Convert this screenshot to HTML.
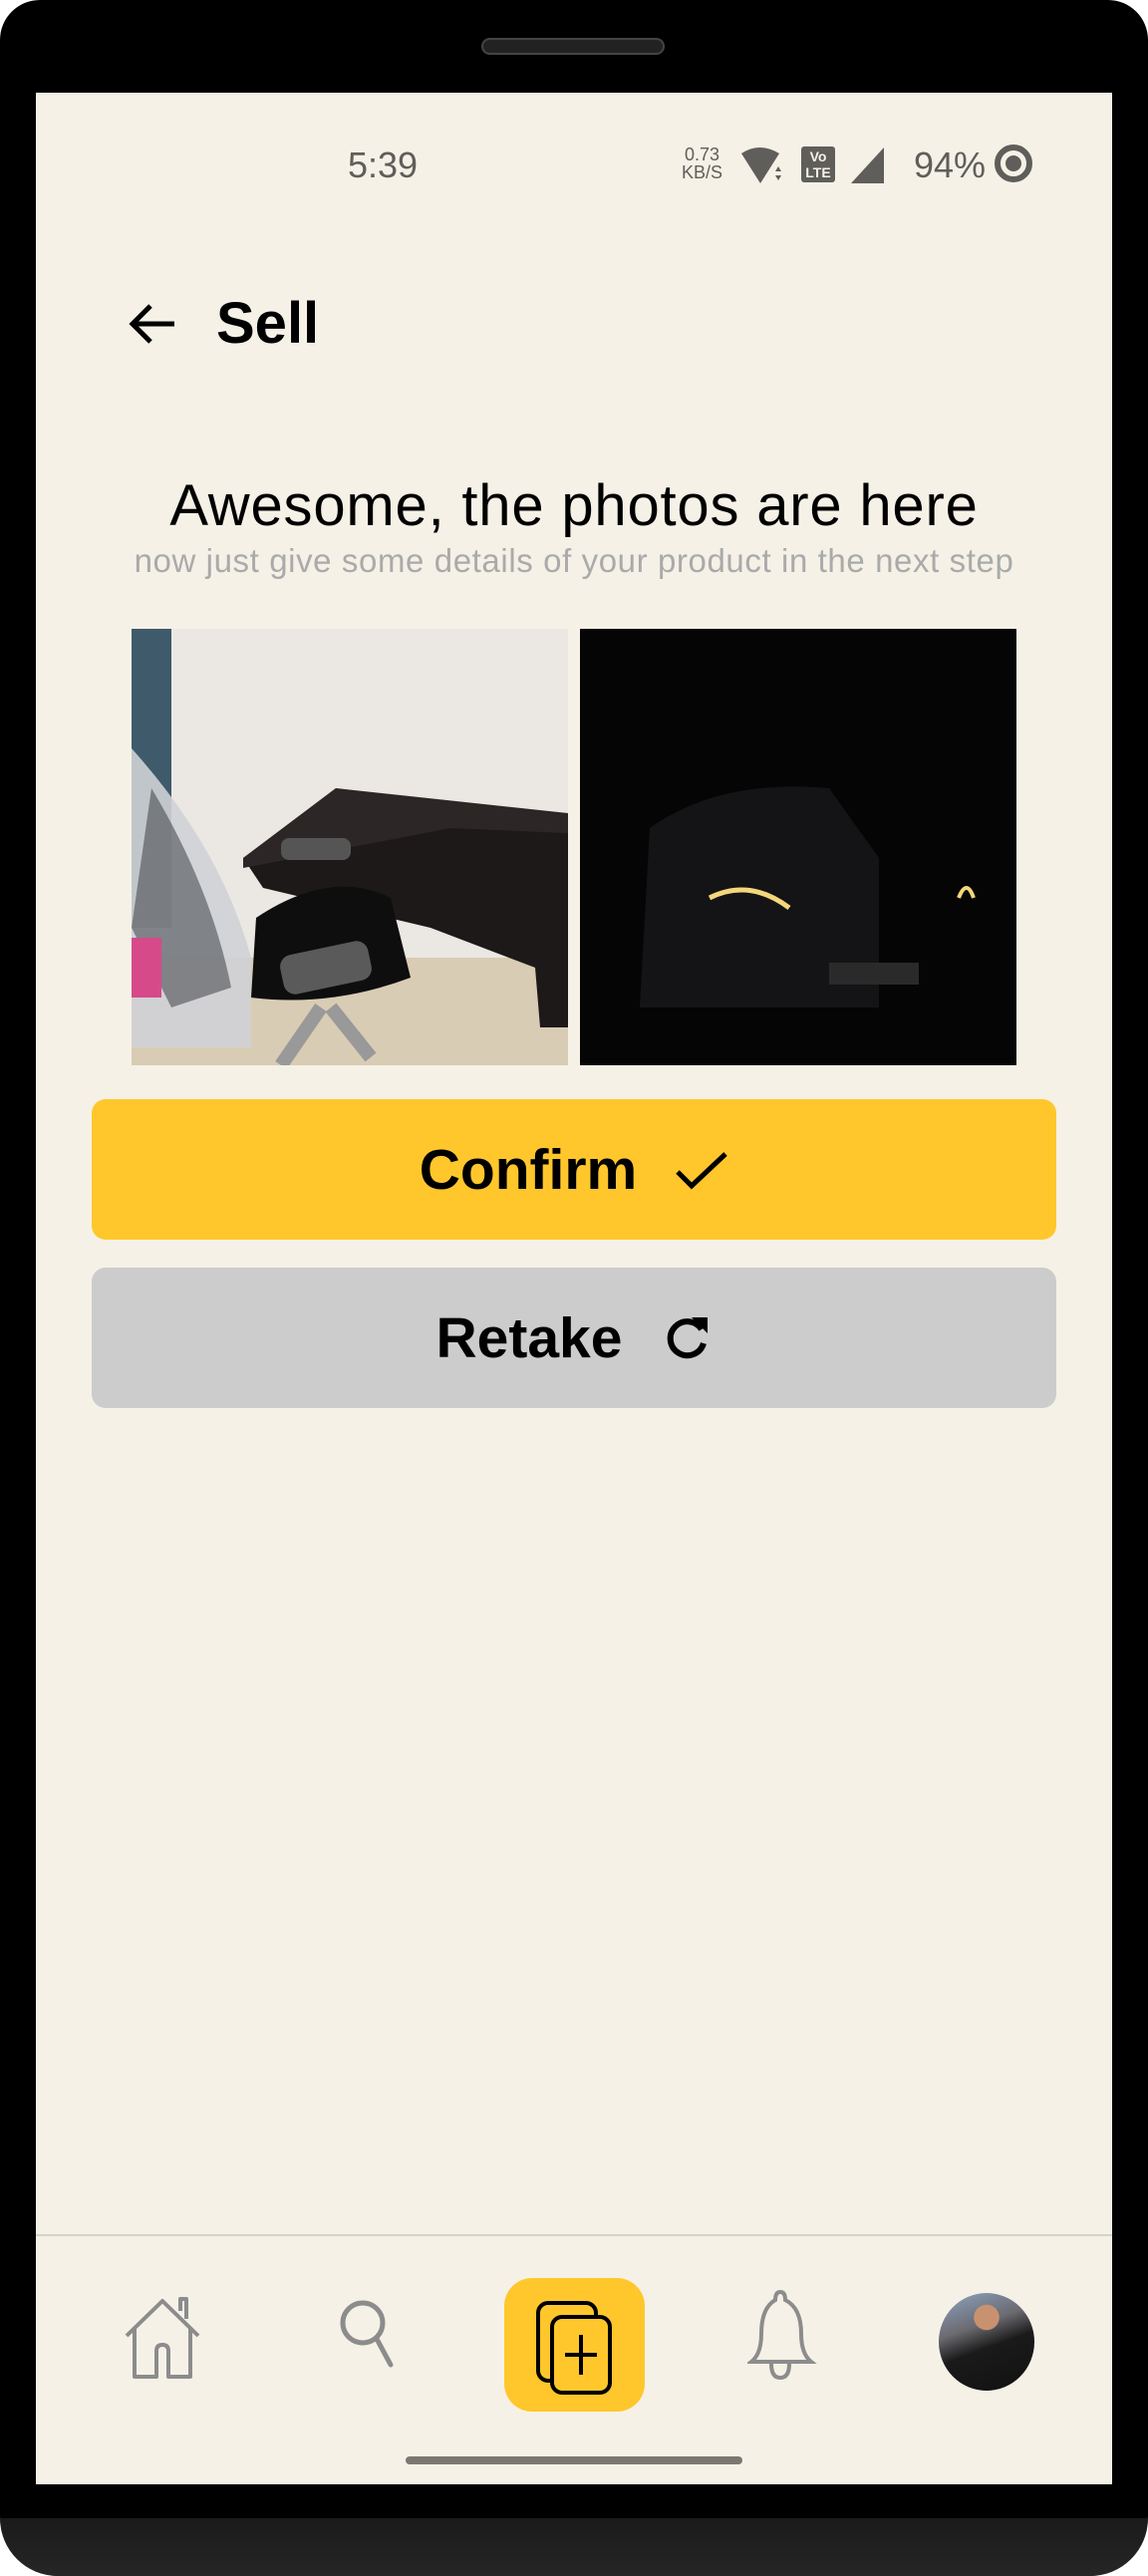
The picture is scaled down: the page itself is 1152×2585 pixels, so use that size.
<!DOCTYPE html>
<html><head><meta charset="utf-8"><style>
*{margin:0;padding:0;box-sizing:border-box}
body{width:1152px;height:2585px;background:#fff;position:relative;overflow:hidden;font-family:"Liberation Sans",sans-serif}
.phone{position:absolute;left:0;top:0;width:1152px;height:2585px;background:#000;border-radius:40px 40px 60px 60px}
.chin{position:absolute;left:0;top:2527px;width:1152px;height:58px;background:linear-gradient(#1a1a1a,#262626);border-radius:0 0 60px 60px}
.spk{position:absolute;left:483px;top:38px;width:184px;height:17px;border-radius:9px;background:#222;border:2px solid #444}
.screen{position:absolute;left:36px;top:93px;width:1080px;height:2400px;background:#f5f1e7;overflow:hidden}
.abs{position:absolute}
.btn{position:absolute;left:56px;width:968px;height:141px;border-radius:14px;display:flex;align-items:center;justify-content:center;font-weight:bold;font-size:57px;color:#000}
</style></head><body>
<div class="phone"></div>
<div class="chin"></div>
<div class="spk"></div>
<div class="screen">
  <div class="abs" style="left:313px;top:52px;font-size:36px;color:#5f5e5a">5:39</div>
  <div class="abs" style="left:648px;top:53px;font-size:18px;line-height:18px;color:#5f5e5a;text-align:center">0.73<br>KB/S</div>
  <svg class="abs" style="left:706px;top:53px" width="70" height="40" viewBox="0 0 70 40">
    <path d="M2 8 Q20 -4 40 8 L21 38 Z" fill="#5f5e5a"/><path d="M36 26 l3 -5 l3 5z M36 30 l3 5 l3 -5z" fill="#5f5e5a"/>
  </svg>
  <div class="abs" style="left:768px;top:54px;width:34px;height:36px;background:#5f5e5a;border-radius:3px;color:#f5f1e7;font-size:14px;font-weight:bold;line-height:16px;text-align:center;padding-top:2px">Vo<br>LTE</div>
  <svg class="abs" style="left:816px;top:54px" width="36" height="38"><path d="M2 37 L35 1 L35 37 Z" fill="#5f5e5a"/></svg>
  <div class="abs" style="left:881px;top:52px;font-size:36px;color:#5f5e5a">94%</div>
  <svg class="abs" style="left:960px;top:50px" width="42" height="42"><circle cx="21" cy="21" r="16" fill="none" stroke="#5f5e5a" stroke-width="6"/><circle cx="21" cy="21" r="8" fill="#5f5e5a"/></svg>

  <svg class="abs" style="left:93px;top:207px" width="50" height="50" viewBox="0 0 50 50"><path d="M46 25 H6 M22 7 L4 25 L22 43" fill="none" stroke="#000" stroke-width="5"/></svg>
  <div class="abs" style="left:181px;top:198px;font-size:58px;font-weight:bold;color:#000">Sell</div>

  <div class="abs" style="left:0;width:1080px;top:381px;text-align:center;font-size:58px;letter-spacing:0.8px;color:#000">Awesome, the photos are here</div>
  <div class="abs" style="left:0;width:1080px;top:451px;text-align:center;font-size:33px;color:#aaa;letter-spacing:0.6px">now just give some details of your product in the next step</div>

  <svg class="abs" style="left:96px;top:538px" width="438" height="438" viewBox="0 0 438 438">
    <rect width="438" height="438" fill="#ebe8e4"/>
    <rect x="0" y="0" width="40" height="300" fill="#3f5a6a"/>
    <path d="M0 330 L438 330 L438 438 L0 438 Z" fill="#d9ccb4"/>
    <path d="M112 230 L205 160 L438 190 L438 400 L410 400 L405 340 L300 300 L132 260 Z" fill="#1e1919"/>
    <path d="M112 230 L205 160 L438 185 L438 205 L320 200 L112 240 Z" fill="#2d2626"/>
    <path d="M0 120 Q90 220 120 330 L120 420 L0 420 Z" fill="#cfd2d6" opacity="0.9"/>
    <path d="M20 160 Q80 260 100 360 L40 380 L0 300 Z" fill="#4a4c52" opacity="0.6"/>
    <path d="M125 290 Q200 240 260 270 L280 350 Q200 380 120 370 Z" fill="#0e0e0e"/>
    <rect x="150" y="320" width="90" height="40" rx="12" fill="#5a5a5a" transform="rotate(-12 195 340)"/>
    <rect x="150" y="210" width="70" height="22" rx="8" fill="#555"/>
    <path d="M200 380 L240 430 M190 380 L150 438" stroke="#999" stroke-width="14"/>
    <rect x="0" y="310" width="30" height="60" fill="#d64a8a"/>
  </svg>
  <svg class="abs" style="left:546px;top:538px" width="438" height="438" viewBox="0 0 438 438">
    <rect width="438" height="438" fill="#050506"/>
    <path d="M70 200 Q140 150 250 160 L300 230 L300 380 L60 380 Z" fill="#141416"/>
    <path d="M130 270 Q170 250 210 280" stroke="#f3d77a" stroke-width="5" fill="none"/>
    <path d="M380 270 q8 -20 15 0" stroke="#f3d77a" stroke-width="4" fill="none"/>
    <rect x="250" y="335" width="90" height="22" fill="#2a2a2a"/>
  </svg>

  <div class="btn" style="top:1010px;background:#ffc72b">Confirm<svg style="margin-left:38px" width="54" height="40" viewBox="0 0 54 40"><path d="M3 22 L17 36 L51 4" fill="none" stroke="#000" stroke-width="5"/></svg></div>
  <div class="btn" style="top:1179px;background:#cccccc">Retake<svg style="margin-left:40px" width="50" height="50" viewBox="0 0 50 50"><path d="M40 16 A17 17 0 1 0 42 30" fill="none" stroke="#000" stroke-width="6"/><path d="M30 4 L46 4 L46 20 Z" fill="#000"/></svg></div>

  <div class="abs" style="left:0;top:2149px;width:1080px;height:2px;background:#d4d2cc"></div>
  <svg class="abs" style="left:83px;top:2206px" width="90" height="90" viewBox="0 0 90 90"><path d="M8 45 L44 10 L80 45 M16 37 V86 H38 V60 Q38 54 44 54 Q50 54 50 60 V86 H72 V37 M62 20 V8 H68 V28" fill="none" stroke="#8c8c8c" stroke-width="4" stroke-linejoin="round"/></svg>
  <svg class="abs" style="left:300px;top:2210px" width="70" height="80" viewBox="0 0 70 80"><circle cx="28" cy="28" r="20" fill="none" stroke="#8c8c8c" stroke-width="5"/><path d="M42 44 L56 70" stroke="#8c8c8c" stroke-width="5" stroke-linecap="round"/></svg>
  <div class="abs" style="left:470px;top:2193px;width:141px;height:134px;background:#ffc72b;border-radius:28px"></div>
  <svg class="abs" style="left:500px;top:2212px" width="80" height="100" viewBox="0 0 80 100"><rect x="4" y="6" width="58" height="78" rx="10" fill="none" stroke="#000" stroke-width="4"/><rect x="18" y="20" width="58" height="76" rx="10" fill="#ffc72b" stroke="#000" stroke-width="4"/><path d="M47 38 V78 M31 58 H63" stroke="#000" stroke-width="4"/></svg>
  <svg class="abs" style="left:714px;top:2199px" width="70" height="100" viewBox="0 0 70 100"><path d="M33 8 Q38 8 38 16 Q54 24 54 50 Q54 70 64 78 L4 78 Q14 70 14 50 Q14 24 28 16 Q28 8 33 8 Z M24 80 Q24 94 33 94 Q42 94 42 80" fill="none" stroke="#8c8c8c" stroke-width="4"/></svg>
  <div class="abs" style="left:906px;top:2208px;width:96px;height:98px;border-radius:50%;background:radial-gradient(circle at 50% 25%,#c89270 0 14%,transparent 15%),linear-gradient(160deg,#8ea6c4 0%,#6b6a70 35%,#1a1a1a 55%,#111 100%)"></div>
  <div class="abs" style="left:371px;top:2372px;width:338px;height:8px;border-radius:4px;background:#7a7871"></div>
</div>
</body></html>
